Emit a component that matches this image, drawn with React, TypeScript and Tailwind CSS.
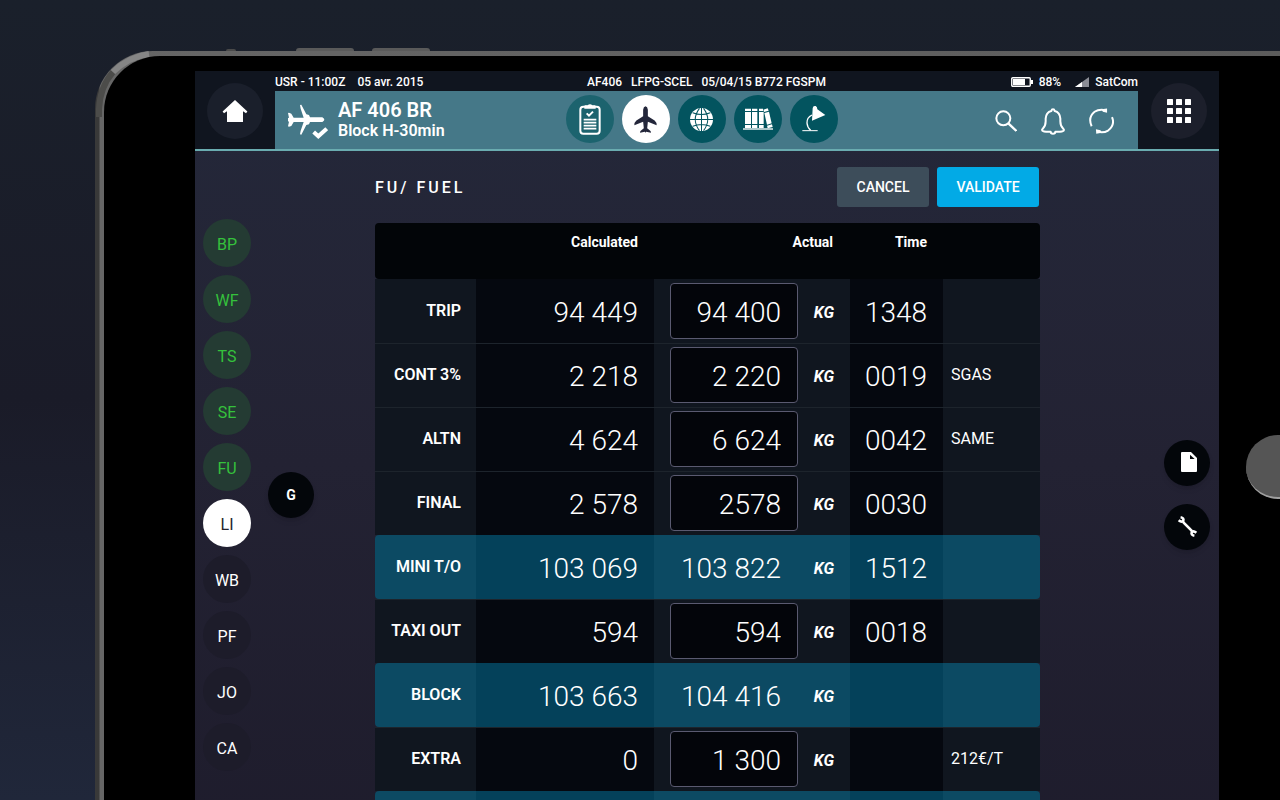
import React from "react";

type Row = {
  label: string;
  calculated: string;
  actual: string;
  time?: string;
  note?: string;
  total?: boolean;
};

const rows: Row[] = [
  { label: "TRIP", calculated: "94 449", actual: "94 400", time: "1348" },
  { label: "CONT 3%", calculated: "2 218", actual: "2 220", time: "0019", note: "SGAS" },
  { label: "ALTN", calculated: "4 624", actual: "6 624", time: "0042", note: "SAME" },
  { label: "FINAL", calculated: "2 578", actual: "2578", time: "0030" },
  { label: "MINI T/O", calculated: "103 069", actual: "103 822", time: "1512", total: true },
  { label: "TAXI OUT", calculated: "594", actual: "594", time: "0018" },
  { label: "BLOCK", calculated: "103 663", actual: "104 416", total: true },
  { label: "EXTRA", calculated: "0", actual: "1 300", note: "212€/T" },
];

type Step = { code: string; state: "done" | "current" | "todo" };

const steps: Step[] = [
  { code: "BP", state: "done" },
  { code: "WF", state: "done" },
  { code: "TS", state: "done" },
  { code: "SE", state: "done" },
  { code: "FU", state: "done" },
  { code: "LI", state: "current" },
  { code: "WB", state: "todo" },
  { code: "PF", state: "todo" },
  { code: "JO", state: "todo" },
  { code: "CA", state: "todo" },
];

const stepStyle = {
  done: "bg-[#243b33] text-[#35c13c]",
  current: "bg-white text-[#23232d]",
  todo: "bg-[#1d1c2a] text-white",
};

function HomeIcon() {
  return (
    <svg viewBox="0 0 26 24" className="h-6 w-[26px]" fill="#fff">
      <path d="M13 1 25.4 12.4 24 14.2 21 12.2V23H5V12.2L2 14.2 .6 12.4Z" />
    </svg>
  );
}

function AppsIcon() {
  const at = [0, 9, 18];
  return (
    <svg viewBox="0 0 24 24" className="size-6" fill="#fff">
      {at.map((y) => at.map((x) => <rect key={`${x}-${y}`} x={x} y={y} width="6" height="6" rx=".6" />))}
    </svg>
  );
}

function FlightStatusIcon() {
  return (
    <svg viewBox="0 0 123 108" className="h-9 w-[41px]" fill="#fff">
      <path d="M3 27 6 26 13 29 20 41H50L41 14 39 3 43 2 58 31 66 33 69 40H106Q112 44 112 47T106 54H69L66 61 58 63 43 92 39 91 41 80 50 54H20L13 66 6 68 3 67 6 53 3 52V42L6 41Z" />
      <path d="M80 84 94 97 119 74" fill="none" stroke="#fff" strokeWidth="12" />
    </svg>
  );
}

function ClipboardIcon() {
  return (
    <svg viewBox="0 0 66 93" className="h-[31px] w-[22px]" fill="none" stroke="#fff">
      <rect x="4" y="8" width="58" height="81" rx="9" strokeWidth="6" />
      <path d="M16 14V6Q16 4 19 4H26Q29 1 33 1T40 4H47Q50 4 50 6V14Z" fill="#fff" stroke="none" />
      <path d="M23 28 30 35 42 23" strokeWidth="6" />
      <path d="M14 47H52M14 56H52M14 65H52M14 74H52" strokeWidth="5" />
    </svg>
  );
}

function PlaneIcon() {
  return (
    <svg viewBox="0 0 68 80" className="h-[27px] w-[23px]" fill="#23263a">
      <path d="M34 1Q40 2 41 11V30L61 43Q67 48 67 57L41 47 39 66 48 73Q51 76 50 79L36 76 34 79 32 76 18 79Q17 76 20 73L29 66 27 47 1 57Q1 48 7 43L27 30V11Q28 2 34 1Z" />
    </svg>
  );
}

function GlobeIcon() {
  return (
    <svg viewBox="0 0 68 68" className="size-[23px]">
      <circle cx="34" cy="34" r="34" fill="#fff" />
      <path
        d="M34 0V68M0 34H68M8 14Q34 25 60 14M8 54Q34 43 60 54M28 1Q3 34 28 67M40 1Q65 34 40 67"
        fill="none"
        stroke="#03545f"
        strokeWidth="3"
      />
    </svg>
  );
}

function BooksIcon() {
  return (
    <svg viewBox="0 0 90 66" className="h-[22px] w-[30px]" fill="#fff">
      <path d="M6 2H24V9H6ZM6 12H24V48H6ZM6 51H24V60H6ZM27 2H43V9H27ZM27 12H43V48H27ZM27 51H43V60H27ZM48 2H60V9H48ZM48 12H62V48H48ZM48 51H62V60H48Z" />
      <path d="M61 5 74 1 77 8 63 12ZM64 15 78 11 86 46 72 50ZM72 53 87 49 89 57 74 61Z" />
      <path d="M0 61H90V65H0Z" />
    </svg>
  );
}

function LampIcon() {
  return (
    <svg viewBox="0 0 72 84" className="h-7 w-6">
      <path d="M32 10Q33 1 41 3 46 5 46 13L70 30 30 47Z" fill="#fff" />
      <path d="M30 30Q14 38 15 54 16 68 26 76" fill="none" stroke="#fff" strokeWidth="4" />
      <path d="M1 77H47" stroke="#fff" strokeWidth="3" />
    </svg>
  );
}

function SearchIcon() {
  return (
    <svg viewBox="0 0 66 66" className="size-[22px]" fill="none" stroke="#fff" strokeWidth="6">
      <circle cx="25" cy="25" r="21" />
      <path d="M40 40 64 63" strokeWidth="7" />
    </svg>
  );
}

function BellIcon() {
  return (
    <svg viewBox="0 0 72 81" className="h-[27px] w-6" fill="none" stroke="#fff" strokeWidth="6" strokeLinejoin="round">
      <path d="M29 71Q3 72 3 66C3 61 14 60 14 40V32Q15 13 31 9 32 4 36 4T41 9Q57 13 58 32V40C58 60 69 61 69 66Q69 72 43 71 43 77 36 77T29 71Z" />
    </svg>
  );
}

function SyncIcon() {
  return (
    <svg viewBox="0 0 76 78" className="h-[26px] w-[25px]" fill="none" stroke="#fff" strokeWidth="6">
      <path d="M8 55Q-4 28 17 11 30 2 50 6" />
      <path d="M38 3 55 1V14L42 11Z" fill="#fff" stroke="none" />
      <path d="M70 27Q80 51 58 68 45 76 27 72" />
      <path d="M21 64 35 67 39 75 22 78Z" fill="#fff" stroke="none" />
    </svg>
  );
}

function BatteryIcon() {
  return (
    <svg viewBox="0 0 22 10" className="h-[10px] w-[22px]" fill="#fff">
      <rect x=".75" y=".75" width="18.5" height="8.5" rx="1" fill="none" stroke="#fff" strokeWidth="1.4" />
      <rect x="2" y="2" width="12" height="6" />
      <rect x="20" y="3" width="2" height="4" />
    </svg>
  );
}

function SignalIcon() {
  return (
    <svg viewBox="0 0 14 10" className="h-[10px] w-[14px]">
      <path d="M14 0V10H0Z" fill="#8b8d96" />
      <path d="M7 5V10H0Z" fill="#fff" />
    </svg>
  );
}

function DocumentIcon() {
  return (
    <svg viewBox="0 0 48 60" className="h-5 w-4">
      <path d="M3 0H30L48 18V57Q48 60 45 60H3Q0 60 0 57V3Q0 0 3 0Z" fill="#fff" />
      <path d="M27 8 41 21H27Z" fill="#03060a" />
    </svg>
  );
}

function WrenchIcon() {
  return (
    <svg viewBox="0 0 62 64" className="size-[21px]" fill="none" stroke="#fff">
      <path d="M17 18 45 46" strokeWidth="8" />
      <path d="M10 4Q21 6 18 15 13 20 4 13" strokeWidth="8" />
      <path d="M52 60Q41 58 44 49 49 44 58 51" strokeWidth="8" />
    </svg>
  );
}

const modules = [
  { name: "Checklist", icon: <ClipboardIcon />, style: "bg-[#1c636e]" },
  { name: "Flight", icon: <PlaneIcon />, style: "bg-white" },
  { name: "Network", icon: <GlobeIcon />, style: "bg-[#03545f]" },
  { name: "Library", icon: <BooksIcon />, style: "bg-[#03545f]" },
  { name: "Lighting", icon: <LampIcon />, style: "bg-[#03545f]" },
];

function Header() {
  return (
    <header className="grid grid-cols-[80px_1fr_81px] border-b-2 border-[#6aacb0] bg-[#10151f]">
      <div className="flex items-center justify-center pt-[2px]">
        <button aria-label="Home" className="flex size-14 items-center justify-center rounded-full bg-[#1a1f2b]">
          <HomeIcon />
        </button>
      </div>
      <div>
        <div className="grid h-5 grid-cols-[1fr_auto_1fr] items-center pt-[2px] text-xs font-medium">
          <div className="flex gap-3">
            <span>USR - 11:00Z</span>
            <span>05 avr. 2015</span>
          </div>
          <div className="flex gap-[9px]">
            <span>AF406</span>
            <span>LFPG-SCEL</span>
            <span>05/04/15 B772 FGSPM</span>
          </div>
          <div className="flex items-center justify-end gap-[6px]">
            <BatteryIcon />
            <span className="mr-2">88%</span>
            <SignalIcon />
            <span>SatCom</span>
          </div>
        </div>
        <div className="grid h-[58px] grid-cols-[1fr_auto_1fr] items-center bg-[#457888]">
          <div className="flex items-center gap-[10px] pl-3">
            <div className="pt-1">
              <FlightStatusIcon />
            </div>
            <div className="font-semibold">
              <p className="text-xl leading-[22px]">AF 406 BR</p>
              <p className="text-base leading-5">Block H-30min</p>
            </div>
          </div>
          <nav className="mt-1 mr-[10px] flex gap-2 self-start">
            {modules.map((m) => (
              <button key={m.name} aria-label={m.name} className={`flex size-12 items-center justify-center rounded-full ${m.style}`}>
                {m.icon}
              </button>
            ))}
          </nav>
          <div className="flex items-center justify-end gap-6 pt-[2px] pr-6">
            <button aria-label="Search" className="flex"><SearchIcon /></button>
            <button aria-label="Notifications" className="flex"><BellIcon /></button>
            <button aria-label="Refresh" className="flex"><SyncIcon /></button>
          </div>
        </div>
      </div>
      <div className="flex items-center justify-center pt-[2px]">
        <button aria-label="Apps" className="flex size-14 items-center justify-center rounded-full bg-[#1c1f2b]">
          <AppsIcon />
        </button>
      </div>
    </header>
  );
}

function FuelRow({ row, first }: { row: Row; first: boolean }) {
  const line = first ? "border-t border-transparent" : "border-t border-[#1d242c]";
  const light = row.total ? "bg-[#0c4a63]" : `${line} bg-[#10161f]`;
  const dark = row.total ? "bg-[#04415a]" : `${line} bg-[#05080f]`;
  const left = row.total ? "rounded-l" : "pb-[2px]";
  const right = row.total ? "rounded-r" : "pb-[2px]";
  const drop = row.total ? "pt-[3px]" : "pt-[2px]";
  const figure = `text-right text-[28px] leading-8 font-light ${drop}`;
  return (
    <tr className="h-16">
      <th scope="row" className={`pr-[15px] text-right text-base font-semibold ${light} ${left}`}>{row.label}</th>
      <td className={`pr-4 ${figure} ${dark}`}>{row.calculated}</td>
      {row.total ? (
        <td className={`pr-[17px] ${figure} ${light}`}>{row.actual}</td>
      ) : (
        <td className={`pt-[3px] pl-4 align-top ${light}`}>
          <input
            aria-label={`${row.label} actual`}
            defaultValue={row.actual}
            className="block h-14 w-full rounded border border-[#5a5a70] bg-[#03050a] pt-[3px] pr-4 text-right text-[28px] font-light outline-none"
          />
        </td>
      )}
      <td className={`pr-4 text-right text-base font-bold italic ${drop} ${light}`}>KG</td>
      <td className={`pr-4 ${figure} ${dark}`}>{row.time}</td>
      <td className={`pl-2 text-left text-base ${light} ${right}`}>{row.note}</td>
    </tr>
  );
}

function FuelTable() {
  return (
    <table className="w-full table-fixed border-separate border-spacing-0">
      <colgroup>
        <col className="w-[101px]" />
        <col />
        <col className="w-36" />
        <col className="w-[52px]" />
        <col className="w-[93px]" />
        <col className="w-[97px]" />
      </colgroup>
      <thead>
        <tr className="h-14 text-right align-top text-sm font-semibold">
          <td className="rounded-l bg-[#020508]" />
          <th scope="col" className="bg-[#020508] pt-[9px] pr-4">Calculated</th>
          <th scope="col" colSpan={2} className="bg-[#020508] pt-[9px] pr-[17px]">Actual</th>
          <th scope="col" className="bg-[#020508] pt-[9px] pr-4">Time</th>
          <td className="rounded-r bg-[#020508]" />
        </tr>
      </thead>
      <tbody>
        {rows.map((row, i) => (
          <FuelRow key={row.label} row={row} first={i === 0} />
        ))}
        <tr className="h-16">
          <td className="rounded-l bg-[#0c4a63]" />
          <td className="bg-[#04415a]" />
          <td className="bg-[#0c4a63]" colSpan={2} />
          <td className="bg-[#04415a]" />
          <td className="rounded-r bg-[#0c4a63]" />
        </tr>
      </tbody>
    </table>
  );
}

function CornerHighlight() {
  return (
    <svg viewBox="0 0 70 70" className="absolute top-0 left-0 size-[70px]" fill="none">
      <path d="M4 66V58Q5 36 18 21" stroke="#4c4c4a" strokeWidth="6" />
      <path d="M18 21Q33 6 54 3" stroke="#858585" strokeWidth="6" />
    </svg>
  );
}

export default function App() {
  return (
    <div className="flex h-screen flex-col overflow-hidden bg-linear-to-b from-[#1a202b] via-[#1a1b28] to-[#20273a] pt-[51px] pl-[95px] font-[Roboto,sans-serif] text-white">
      <div className="relative flex grow rounded-tl-[58px] bg-[linear-gradient(90deg,#393939_0,#393939_4px,#666_5px,#5c5c5c_100%)] pt-[5px] pl-[9px]">
        <div className="absolute -top-[2px] left-[131px] h-[2px] w-[10px] rounded-t bg-[#4a4a4a]" />
        <div className="absolute -top-[3px] left-[201px] h-[3px] w-[58px] rounded-t-sm bg-[#5a5a5a]" />
        <div className="absolute -top-[3px] left-[277px] h-[3px] w-[58px] rounded-t-sm bg-[#5a5a5a]" />
        <CornerHighlight />
        <div className="relative flex grow rounded-tl-[56px] bg-black pt-[15px] pl-[91px]">
          <div className="flex grow flex-col bg-linear-to-b from-[#24283a] via-[#232233] to-[#1e1c2c]">
            <Header />
            <main className="grid grow grid-cols-[180px_1fr_179px]">
              <aside className="flex gap-[17px] pt-[68px] pl-2">
                <nav className="flex flex-col gap-2">
                  {steps.map((s) => (
                    <button key={s.code} className={`flex size-12 items-center justify-center rounded-full pt-[3px] text-base ${stepStyle[s.state]}`}>
                      {s.code}
                    </button>
                  ))}
                </nav>
                <div className="pt-[253px]">
                  <button className="size-[46px] rounded-full bg-[#03060a] text-sm font-bold shadow-md">G</button>
                </div>
              </aside>
              <section className="pt-4">
                <div className="mb-4 flex h-10 items-center justify-end gap-2 pr-px text-sm font-medium">
                  <h1 className="mr-auto pt-[2px] text-base tracking-[3px]">FU/ FUEL</h1>
                  <button className="h-10 w-[92px] rounded-[3px] bg-[#3d4d5a]">CANCEL</button>
                  <button className="h-10 w-[102px] rounded-[3px] bg-[#02aae6]">VALIDATE</button>
                </div>
                <FuelTable />
              </section>
              <aside className="flex flex-col items-end gap-[18px] pt-[289px] pr-[9px]">
                <button aria-label="Documents" className="flex size-[46px] items-center justify-center rounded-full bg-[#03060a] pb-[2px] pl-[3px] shadow-md">
                  <DocumentIcon />
                </button>
                <button aria-label="Tools" className="flex size-[46px] items-center justify-center rounded-full bg-[#03060a] pb-[2px] shadow-md">
                  <WrenchIcon />
                </button>
              </aside>
            </main>
          </div>
          <div className="w-[61px] shrink-0 overflow-hidden pt-[364px] pl-[27px]">
            <div className="size-16 rounded-full border-b-2 border-[#a0a0a0] bg-[#555]" />
          </div>
        </div>
      </div>
    </div>
  );
}
